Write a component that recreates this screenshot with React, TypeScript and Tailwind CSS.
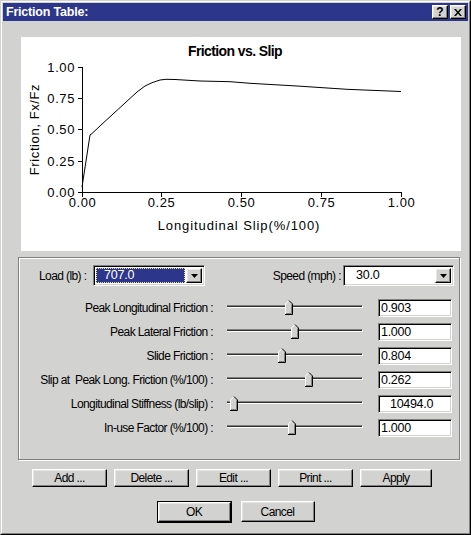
import React from "react";

const raised =
  "border border-t-white border-l-white border-r-black border-b-black shadow-[inset_-1px_-1px_0_#808080,inset_1px_1px_0_#e6e6e4]";
const sunken =
  "border border-t-[#808080] border-l-[#808080] border-r-white border-b-white shadow-[inset_1px_1px_0_#000,inset_-1px_-1px_0_#d2d2d0]";

const chartFont = "Liberation Sans, Arial, sans-serif";

function Chart() {
  const yt = [
    { v: "0.00", y: 155.5 },
    { v: "0.25", y: 124.5 },
    { v: "0.50", y: 92.5 },
    { v: "0.75", y: 61.5 },
    { v: "1.00", y: 30.5 },
  ];
  const xt = [
    { v: "0.00", x: 61.5 },
    { v: "0.25", x: 140.5 },
    { v: "0.50", x: 220.5 },
    { v: "0.75", x: 300.5 },
    { v: "1.00", x: 380.5 },
  ];
  const pts =
    "61,150 69,98 71,96.5 80,88 116,55 124,49 131,45.7 139,43 145,42.3 154,42.5 179,44 209,44.7 229,46.3 276,49 326,52.3 380,54.5";
  return (
    <svg width="440" height="214" className="block">
      <text x="214" y="18.5" textAnchor="middle" fontSize="14" fontWeight="bold" fontFamily={chartFont} fill="#000">
        Friction vs. Slip
      </text>
      <path d="M61.5 30 V155.5 H381" stroke="#000" fill="none" strokeWidth="1" />
      {yt.map((t) => (
        <g key={t.v}>
          <line x1="57" x2="61.5" y1={t.y} y2={t.y} stroke="#000" />
          <text x="54" y={t.y + 4.7} textAnchor="end" fontSize="13" letterSpacing="0.6" fontFamily={chartFont} fill="#000">
            {t.v}
          </text>
        </g>
      ))}
      {xt.map((t) => (
        <g key={t.v}>
          <line x1={t.x} x2={t.x} y1="155.5" y2="160" stroke="#000" />
          <text x={t.x} y="170" textAnchor="middle" fontSize="13" letterSpacing="0.6" fontFamily={chartFont} fill="#000">
            {t.v}
          </text>
        </g>
      ))}
      <text x="218" y="193" textAnchor="middle" fontSize="13" letterSpacing="0.9" fontFamily={chartFont} fill="#000">
        Longitudinal Slip(%/100)
      </text>
      <text
        transform="translate(17.5 92.5) rotate(-90)"
        textAnchor="middle"
        fontSize="13"
        letterSpacing="0.6"
        fontFamily={chartFont}
        fill="#000"
      >
        Friction, Fx/Fz
      </text>
      <polyline points={pts} fill="none" stroke="#000" strokeWidth="1" />
    </svg>
  );
}

function Arrow() {
  return (
    <svg width="7" height="4" viewBox="0 0 7 4" className="block">
      <polygon points="0,0 7,0 3.5,4" fill="#000" />
    </svg>
  );
}

function Combo({ value, selected, width, pad }: { value: string; selected?: boolean; width: string; pad: string }) {
  return (
    <div className={`${sunken} ${width} h-[21px] bg-white p-px flex`}>
      <div className="flex-1 p-px flex">
        {selected ? (
          <div className="flex-1 bg-[#2c368a] border border-dotted border-[#e8e27a] flex items-center text-white mr-px">
            <span className={pad}>{value}</span>
          </div>
        ) : (
          <div className="flex-1 flex items-center text-black">
            <span className={pad}>{value}</span>
          </div>
        )}
        <div className={`${raised} w-[16px] bg-[#d2d2d0] flex items-center justify-center`}>
          <Arrow />
        </div>
      </div>
    </div>
  );
}

function Thumb() {
  return (
    <svg width="8" height="15" viewBox="0 0 8 15" className="block">
      <polygon points="0.5,14.5 0.5,4 4,0.5 7.5,4 7.5,14.5" fill="#d2d2d0" />
      <polyline points="0.5,14 0.5,4 4,0.5" fill="none" stroke="#fff" />
      <polyline points="4,0.5 7.5,4 7.5,14.5 0,14.5" fill="none" stroke="#000" />
      <polyline points="6.5,4.5 6.5,13.5 1,13.5" fill="none" stroke="#808080" />
    </svg>
  );
}

function SliderRow({ label, pos, value, pad }: { label: string; pos: number; value: string; pad: string }) {
  return (
    <div className="flex h-[18px] items-center">
      <div className="w-[194px] text-right whitespace-pre">{label}</div>
      <div className="relative ml-[14px] w-[136px] h-[18px]">
        <div className="absolute left-0 right-0 top-[6px] h-[3px] border-t border-t-[#808080] bg-[#303030] border-b border-b-white border-r border-r-white" />
        <div className="absolute top-[1px]" style={{ left: pos - 4 }}>
          <Thumb />
        </div>
      </div>
      <div className={`${sunken} ml-[15px] w-[74px] h-[18px] bg-white flex items-center ${pad} text-[12.5px] tracking-[-0.3px]`}>
        {value}
      </div>
    </div>
  );
}

function Btn({ children, w = "w-[75px]", h = "h-[18px]" }: { children: React.ReactNode; w?: string; h?: string }) {
  return (
    <div className={`${raised} ${w} ${h} bg-[#d2d2d0] flex items-center justify-center`}>{children}</div>
  );
}

export default function App() {
  const rows = [
    { label: "Peak Longitudinal Friction :", pos: 62, value: "0.903", pad: "pl-[2px]" },
    { label: "Peak Lateral Friction :", pos: 68, value: "1.000", pad: "pl-[2px]" },
    { label: "Slide Friction :", pos: 55, value: "0.804", pad: "pl-[2px]" },
    { label: "Slip at  Peak Long. Friction (%/100) :", pos: 82, value: "0.262", pad: "pl-[2px]" },
    { label: "Longitudinal Stiffness (lb/slip) :", pos: 7, value: "10494.0", pad: "pl-[11px]" },
    { label: "In-use Factor (%/100) :", pos: 65, value: "1.000", pad: "pl-[2px]" },
  ];
  return (
    <div className="w-[471px] h-[535px] overflow-hidden bg-[#d2d2d0] border border-t-[#d2d2d0] border-l-[#d2d2d0] border-r-black border-b-black font-['Liberation_Sans',Arial,sans-serif] text-[12px] tracking-[-0.6px] text-black">
      <div className="h-full border border-t-white border-l-white border-r-[#808080] border-b-[#808080] p-px flex flex-col">
        {/* title bar */}
        <div className="h-[18px] bg-[#2c368a] flex items-center justify-between pl-[3px] pr-[2px]">
          <span className="text-white font-bold text-[12.5px] tracking-[-0.2px]">Friction Table:</span>
          <div className="flex gap-[2px]">
            <div className={`${raised} w-[16px] h-[14px] bg-[#d2d2d0] flex items-center justify-center`}>
              <span className="font-bold text-[12px] leading-none tracking-normal">?</span>
            </div>
            <div className={`${raised} w-[16px] h-[14px] bg-[#d2d2d0] flex items-center justify-center`}>
              <svg width="8" height="7" viewBox="0 0 8 7" className="block">
                <path d="M0 0 L2 0 L4 2.5 L6 0 L8 0 L5 3.5 L8 7 L6 7 L4 4.5 L2 7 L0 7 L3 3.5 Z" fill="#000" />
              </svg>
            </div>
          </div>
        </div>

        {/* body */}
        <div className="flex-1 flex flex-col">
          <div className="mt-[16px] ml-[18px] w-[440px] h-[214px] bg-white">
            <Chart />
          </div>

          <div className="mt-[6px] ml-[15px] w-[442px] h-[203px] border border-[#808080] shadow-[inset_1px_1px_0_#fff,1px_1px_0_#fff] pt-[7px] flex flex-col">
            <div className="flex h-[21px] items-center">
              <div className="w-[74px] pl-[20px]">Load (lb) :</div>
              <Combo value="707.0" selected width="w-[112px]" pad="pl-[7px] text-[12.5px] tracking-[-0.2px]" />
              <div className="flex-1 text-right pr-[2px]">Speed (mph) :</div>
              <Combo value="30.0" width="w-[111px]" pad="pl-[10px] text-[12.5px] tracking-[-0.2px]" />
              <div className="w-[5px]" />
            </div>
            <div className="mt-[13px] flex flex-col gap-[6px]">
              {rows.map((r) => (
                <SliderRow key={r.label} {...r} />
              ))}
            </div>
          </div>

          <div className="mt-[9px] pl-[29px] flex gap-[7px]">
            <Btn>Add ...</Btn>
            <Btn>Delete ...</Btn>
            <Btn>Edit ...</Btn>
            <Btn>Print ...</Btn>
            <Btn w="w-[72px]">Apply</Btn>
          </div>

          <div className="mt-[14px] flex justify-center gap-[9px]">
            <div className="w-[75px] h-[22px] border border-black">
              <div className={`${raised} w-full h-full bg-[#d2d2d0] flex items-center justify-center`}>OK</div>
            </div>
            <Btn w="w-[74px]" h="h-[21px]">Cancel</Btn>
          </div>
        </div>
      </div>
    </div>
  );
}
